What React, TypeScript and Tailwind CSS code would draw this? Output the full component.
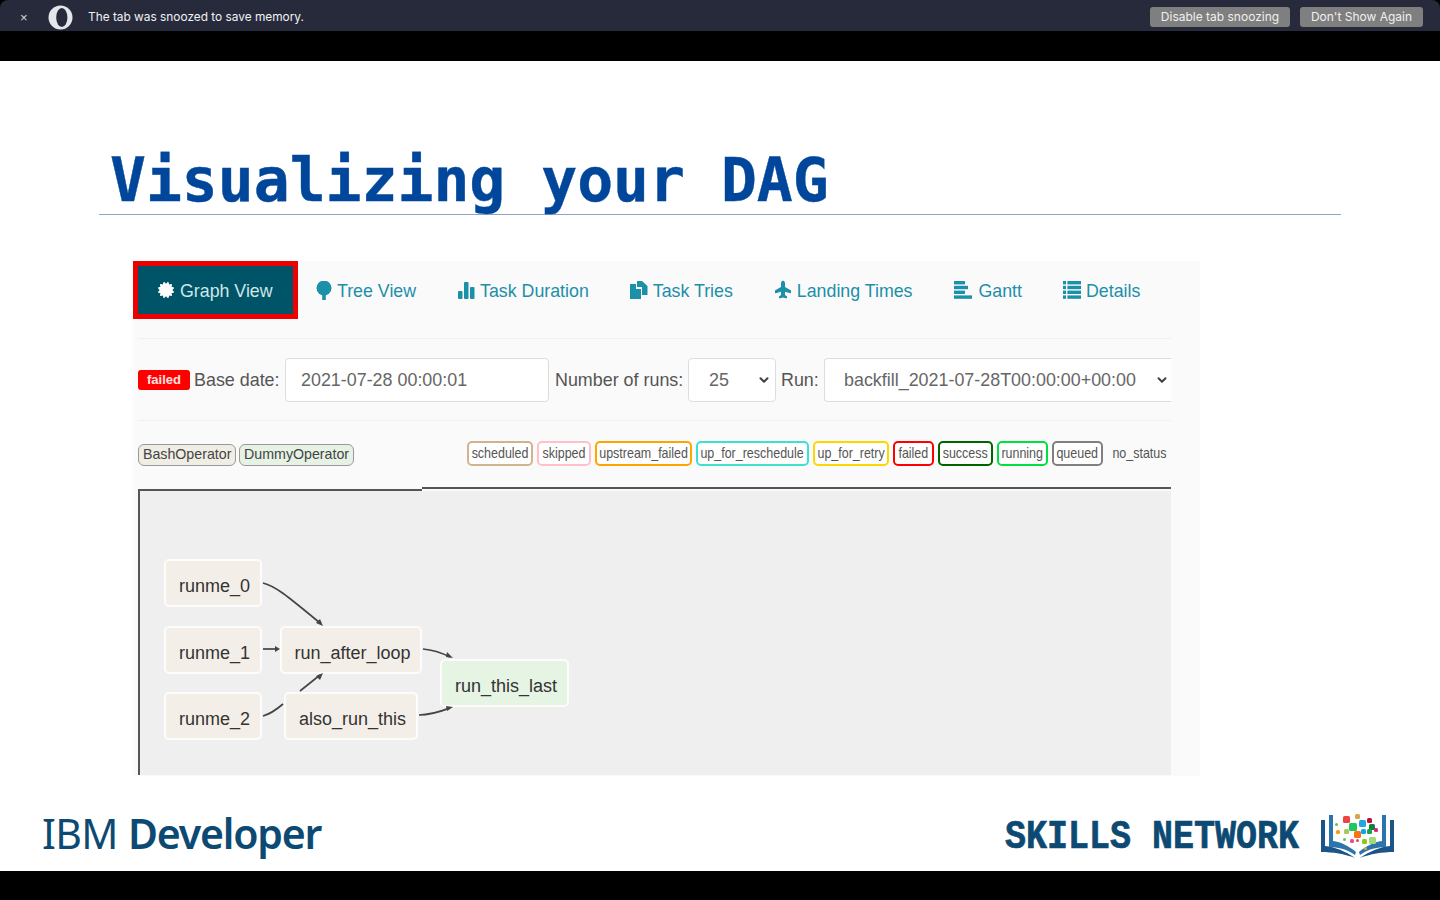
import React from "react";
import { ChevronDown } from "lucide-react";
import { FaCertificate, FaPlane } from "react-icons/fa";

const tabs = [
  { label: "Task Duration", icon: "stats" },
  { label: "Task Tries", icon: "copy" },
  { label: "Landing Times", icon: "plane" },
  { label: "Gantt", icon: "gantt" },
  { label: "Details", icon: "list" },
];

const states = [
  { name: "scheduled", cls: "w-[66px] border-[#d2b48c]" },
  { name: "skipped", cls: "w-[54px] border-[#ffc0cb]" },
  { name: "upstream_failed", cls: "w-[97px] border-[#ffa500]" },
  { name: "up_for_reschedule", cls: "w-[113px] border-[#40e0d0]" },
  { name: "up_for_retry", cls: "w-[76px] border-[#ffd700]" },
  { name: "failed", cls: "w-[41px] border-[#ff0000]" },
  { name: "success", cls: "w-[55px] border-[#006400]" },
  { name: "running", cls: "w-[51px] border-[#00e040]" },
  { name: "queued", cls: "w-[51px] border-[#808080]" },
];

const nodes = [
  { name: "runme_0", cls: "left-[24px] top-[68px] w-[98px] bg-[#f3efe8]" },
  { name: "runme_1", cls: "left-[24px] top-[135px] w-[98px] bg-[#f3efe8]" },
  { name: "runme_2", cls: "left-[24px] top-[201px] w-[98px] bg-[#f3efe8]" },
  { name: "run_after_loop", cls: "left-[140px] top-[135px] w-[142px] bg-[#f3efe8]" },
  { name: "also_run_this", cls: "left-[144px] top-[201px] w-[134px] bg-[#f3efe8]" },
  { name: "run_this_last", cls: "left-[300px] top-[168px] w-[129px] bg-[#e6f5e3]" },
];

// x, y, size, colour of the little squares in the book logo
const blocks = [
  [22, 2, 7, "#ef4444"], [34, 0, 5, "#dba24a"], [46, 4, 5, "#be123c"], [28, 9, 8, "#22c55e"],
  [38, 6, 7, "#22a7e0"], [48, 10, 6, "#15803d"], [33, 17, 7, "#f97316"], [23, 15, 5, "#a3c95a"],
  [15, 16, 4, "#f59e0b"], [40, 15, 5, "#0ea5e9"], [46, 15, 5, "#16a34a"], [53, 14, 4, "#db2777"],
  [29, 25, 4, "#ec4899"], [35, 25, 3, "#ef4444"], [41, 25, 5, "#84cc16"], [48, 23, 7, "#a3d977"],
  [43, 33, 3, "#dba24a"], [14, 9, 3, "#65b96a"], [22, 24, 3, "#65b96a"],
];

function TabIcon({ name }: { name: string }) {
  if (name === "stats") {
    return (
      <svg width="17" height="17" viewBox="0 0 17 17" fill="currentColor">
        <rect x="0" y="9" width="4.5" height="8" rx="1" />
        <rect x="6" y="0" width="4.5" height="17" rx="1" />
        <rect x="12" y="5" width="4.5" height="12" rx="1" />
      </svg>
    );
  }
  if (name === "copy") {
    return (
      <svg width="18" height="18" viewBox="0 0 18 18" fill="currentColor">
        <path d="M7 0H12L17.5 5V14H12V6H7Z" />
        <path d="M0 3H6V8H11V18H0Z" />
      </svg>
    );
  }
  if (name === "plane") return <FaPlane className="h-[19px] w-[18px] -translate-y-[1px] -rotate-90" />;
  if (name === "gantt") {
    return (
      <svg width="20" height="18" viewBox="-1 0 20 18" fill="currentColor">
        <rect x="0" y="0" width="11" height="3.4" />
        <rect x="0" y="4.8" width="14" height="3.4" />
        <rect x="0" y="9.6" width="11" height="3.4" />
        <rect x="0" y="14.4" width="18" height="3.4" />
      </svg>
    );
  }
  return (
    <svg width="18" height="18" viewBox="0 0 18 18" fill="currentColor">
      <rect x="0" y="0" width="3" height="3.4" />
      <rect x="4.4" y="0" width="13.6" height="3.4" />
      <rect x="0" y="4.8" width="3" height="3.4" />
      <rect x="4.4" y="4.8" width="13.6" height="3.4" />
      <rect x="0" y="9.6" width="3" height="3.4" />
      <rect x="4.4" y="9.6" width="13.6" height="3.4" />
      <rect x="0" y="14.4" width="3" height="3.4" />
      <rect x="4.4" y="14.4" width="13.6" height="3.4" />
    </svg>
  );
}

function SkillsLogo() {
  const page1 = "M0 6H4V32C14 33 24 37 34 44C24 40 12 38 0 38Z";
  const page2 = "M8 1H12V27C20 28 28 32 35 38L34 41C26 35 16 33 8 33Z";
  return (
    <svg width="74" height="46" viewBox="0 0 74 46" className="translate-y-[3px]">
      <path d={page1} fill="#1a5488" />
      <path d={page2} fill="#2b74ad" />
      <g transform="translate(73 0) scale(-1 1)">
        <path d={page1} fill="#1a5488" />
        <path d={page2} fill="#2b74ad" />
      </g>
      {blocks.map(([x, y, s, c], i) => (
        <rect key={i} x={x as number} y={y as number} width={s as number} height={s as number} rx="1.5" fill={c as string} />
      ))}
    </svg>
  );
}

export default function App() {
  return (
    <div className="flex h-[900px] w-[1440px] flex-col overflow-hidden bg-black font-['Liberation_Sans',sans-serif]">
      {/* snooze banner */}
      <div className="flex h-[31px] shrink-0 items-center rounded-t-[8px] bg-[#272a3b] pl-[20px] pr-[17px] pt-[3px] text-white">
        <span className="w-[28px] text-[13px] leading-none text-[#d8d8de]">×</span>
        <svg width="25" height="25" viewBox="0 0 25 25">
          <circle cx="12.5" cy="12.5" r="12" fill="#e4e6ec" />
          <ellipse cx="13.8" cy="12.5" rx="5.6" ry="9.6" fill="#272a3b" />
        </svg>
        <span className="ml-[15px] mt-[1px] font-['Inter',sans-serif] text-[11.86px] text-[#f1f1f4]">
          The tab was snoozed to save memory.
        </span>
        <button className="ml-auto flex h-[20px] w-[140px] items-center justify-center rounded-[3px] bg-[#7f7f7f] font-['Inter',sans-serif] text-[12px] text-[#f0f0f0]">
          Disable tab snoozing
        </button>
        <button className="ml-[10px] flex h-[20px] w-[123px] items-center justify-center rounded-[3px] bg-[#7f7f7f] font-['Inter',sans-serif] text-[12px] text-[#f0f0f0]">
          Don't Show Again
        </button>
      </div>
      <div className="h-[30px] shrink-0" />

      {/* slide */}
      <div className="flex h-[810px] shrink-0 flex-col bg-white">
        <div className="mx-[99px] flex h-[154px] items-end border-b border-[#8fa3c8] pl-[11px]">
          <h1 className="font-['DejaVu_Sans_Mono',monospace] text-[59.7px] font-bold leading-[66px] text-[#00479b] [-webkit-text-stroke:0.4px_#00479b]">
            Visualizing your DAG
          </h1>
        </div>

        <div className="ml-[133px] mt-[46px] h-[515px] w-[1067px] bg-[#fafafa] text-[17.9px] text-[#555]">
          {/* tabs */}
          <div className="flex h-[58px] items-center text-[17.8px] text-[#1c8fa9]">
            <div className="flex h-[58px] w-[165px] items-center border-[5px] border-[#ee0000] bg-[#005468] pl-[20px] text-[#cfe6ea]">
              <FaCertificate className="h-[16px] w-[16px] text-white" />
              <span className="ml-[6px] mt-[2px]">Graph View</span>
            </div>
            <div className="ml-[18px] flex items-center gap-[5px]">
              <svg width="16" height="19" viewBox="0 0 16 19" fill="currentColor">
                <circle cx="8" cy="7" r="7.5" />
                <rect x="6.2" y="11" width="3.6" height="8" />
              </svg>
              <span className="mt-[2px]">Tree View</span>
            </div>
            <div className="ml-[42px] flex items-center gap-[41px]">
              {tabs.map((tab) => (
                <div key={tab.label} className="flex items-center gap-[5px]">
                  <TabIcon name={tab.icon} />
                  <span className="mt-[2px]">{tab.label}</span>
                </div>
              ))}
            </div>
          </div>

          {/* run form */}
          <div className="ml-[5px] mr-[29px] mt-[19px] flex h-[83px] items-center border-y border-[#f0f0f0] pt-[1px]">
            <span className="flex h-[20px] w-[52px] items-center justify-center rounded-[3px] bg-[#ff0000] text-[13px] font-bold text-[#ffe0e0]">
              failed
            </span>
            <span className="ml-[4px] w-[91px]">Base date:</span>
            <div className="flex h-[44px] w-[264px] items-center rounded-[4px] border border-[#ddd] bg-white pl-[15px] text-[#666]">
              2021-07-28 00:00:01
            </div>
            <span className="ml-[6px] w-[133px] whitespace-nowrap">Number of runs:</span>
            <div className="flex h-[44px] w-[88px] items-center rounded-[4px] border border-[#ddd] bg-white pl-[20px] pr-[4px] text-[#666]">
              25
              <ChevronDown className="ml-auto h-[14px] w-[14px] text-[#444]" strokeWidth={3.5} />
            </div>
            <span className="ml-[5px] w-[43px]">Run:</span>
            <div className="flex h-[44px] flex-1 items-center rounded-l-[4px] border border-r-0 border-[#ddd] bg-white pl-[19px] pr-[2px] text-[#666]">
              backfill_2021-07-28T00:00:00+00:00
              <ChevronDown className="ml-auto h-[14px] w-[14px] text-[#444]" strokeWidth={3.5} />
            </div>
          </div>

          {/* legend */}
          <div className="ml-[5px] mr-[34px] mt-[20px] flex h-[25px] items-center text-[14.5px] text-[#444]">
            <span className="mt-[3px] flex h-[22px] w-[98px] items-center justify-center rounded-[6px] border border-[#999] bg-[#f0ede4]">
              <span className="inline-block scale-x-[0.98] whitespace-nowrap">BashOperator</span>
            </span>
            <span className="ml-[3px] mt-[3px] flex h-[22px] w-[115px] items-center justify-center rounded-[6px] border border-[#999] bg-[#e6f2e4]">
              <span className="inline-block scale-x-[0.98] whitespace-nowrap">DummyOperator</span>
            </span>
            <div className="ml-auto flex items-center gap-[4px]">
              {states.map((state) => (
                <span key={state.name} className={`flex h-[25px] items-center justify-center rounded-[5px] border-2 bg-white text-[#555] ${state.cls}`}>
                  <span className="inline-block scale-x-[0.86] whitespace-nowrap">{state.name}</span>
                </span>
              ))}
              <span className="ml-[5px] flex w-[54px] justify-center text-[#555]">
                <span className="inline-block scale-x-[0.86] whitespace-nowrap">no_status</span>
              </span>
            </div>
          </div>

          {/* graph canvas */}
          <div className="ml-[5px] mr-[29px] mt-[21px]">
            <div className="flex h-[4px]">
              <div className="mt-[2px] h-[2px] w-[284px] bg-[#555]" />
              <div className="h-[2px] flex-1 bg-[#555]" />
            </div>
            <div className="relative h-[284px] border-l-2 border-[#555] bg-[#efefef] text-[18px] text-[#333]">
              {nodes.map((node) => (
                <div key={node.name} className={`absolute flex h-[48px] items-center justify-center rounded-[5px] border-2 border-[#fcfcfa] pl-[3px] pt-[6px] ${node.cls}`}>
                  {node.name}
                </div>
              ))}
              <svg className="absolute -left-[2px] -top-[4px]" width="1033" height="288" viewBox="138 488 1033 288" fill="none" stroke="#444" strokeWidth="1.7">
                <path d="M263 584C275 587 285 595 320 624" />
                <path d="M263 650H276" />
                <path d="M263 717C270 715 276 711 283 705" />
                <path d="M300 692L320 676" />
                <path d="M423 650C435 651 442 654 450 658" />
                <path d="M419 716C432 716 442 712 450 709" />
                <g fill="#444" stroke="none">
                  <path d="M323 627L316 624L320 620Z" />
                  <path d="M280 650L275 647V653Z" />
                  <path d="M323 674L316 677L320 681Z" />
                  <path d="M453 659L447 653L446 658Z" />
                  <path d="M453 708L446 707L447 712Z" />
                </g>
              </svg>
            </div>
          </div>
        </div>

        {/* footer logos */}
        <div className="flex flex-1 items-center justify-between pl-[42px] pr-[45px] pt-[20px] text-[#0d4a73]">
          <div className="font-['Noto_Sans',sans-serif] text-[41px] leading-none tracking-[-0.6px]">
            IBM <span className="font-semibold tracking-[-1.2px]">Developer</span>
          </div>
          <div className="flex items-center gap-[22px]">
            <span className="inline-block translate-y-[5px] scale-y-[1.15] font-['Liberation_Mono',monospace] text-[35px] font-bold leading-none [-webkit-text-stroke:0.6px_#0d4a73]">
              SKILLS NETWORK
            </span>
            <SkillsLogo />
          </div>
        </div>
      </div>
    </div>
  );
}
